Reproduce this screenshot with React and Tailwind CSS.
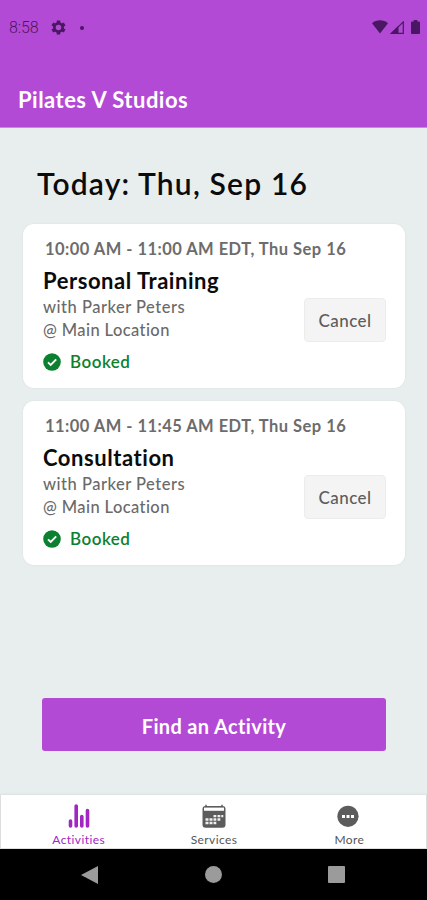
import React from 'react';

const bookings = [
  { id: 1, time: '10:00 AM - 11:00 AM EDT, Thu Sep 16', title: 'Personal Training', staff: 'Parker Peters', place: 'Main Location' },
  { id: 2, time: '11:00 AM - 11:45 AM EDT, Thu Sep 16', title: 'Consultation', staff: 'Parker Peters', place: 'Main Location' },
];

const StatusBar = () => (
  <div className="flex h-[56px] items-center pl-[9px] pr-[7px] text-[#4a1762]">
    <span className="w-[41px] whitespace-nowrap font-['Roboto'] text-[16px] font-light leading-none tracking-[-0.1px]">8:58</span>
    <svg className="-mt-px h-[17px] w-[17px]" viewBox="0 0 24 24" fill="none" stroke="currentColor">
      <circle cx="12" cy="12" r="5.8" strokeWidth="3.8" />
      <path d="M12 2v4M12 18v4M3.3 7l3.5 2M17.2 15l3.5 2M3.3 17l3.5-2M17.2 9l3.5-2" strokeWidth="5" />
    </svg>
    <span className="ml-[13px] h-[4px] w-[4px] rounded-full bg-current" />
    <div className="ml-auto mt-[-2px] flex items-center">
      <svg className="h-[14px] w-[16px]" viewBox="0 0 16 14" fill="currentColor">
        <path d="M0 3.2C4.5-.6 11.5-.6 16 3.2L8 13.5z" />
      </svg>
      <svg className="ml-[2px] h-[13px] w-[14px]" viewBox="0 0 14 13">
        <path d="M0 13 8.5 4.7V13z" fill="currentColor" />
        <path d="M1.5 12.4 13.3.9v11.5z" fill="none" stroke="currentColor" strokeWidth="1.2" />
      </svg>
      <svg className="ml-[7px] h-[14px] w-[9px]" viewBox="0 0 9 14" fill="currentColor">
        <path d="M2.7 0h3.6v1.5H8q1 0 1 1V13q0 1-1 1H1q-1 0-1-1V2.5q0-1 1-1h1.7z" />
      </svg>
    </div>
  </div>
);

const BookingCard = ({ booking }) => (
  <div className="h-[164px] rounded-[11px] bg-white pl-[20px] pr-[19px] pt-[14px] shadow-[0_0_2px_rgba(0,0,0,0.08)]">
    <p className="ml-[2px] whitespace-nowrap text-[16.5px] font-bold leading-[22px] tracking-[0.47px] text-[#6c6c6c]">{booking.time}</p>
    <div className="flex justify-between">
      <div className="whitespace-nowrap">
        <h2 className="mt-[8px] text-[22px] font-bold leading-[26px] tracking-[0.55px] text-[#0b0b0b]">{booking.title}</h2>
        <p className="mt-[2px] text-[16.5px] font-medium leading-[23px] tracking-[0.5px] text-[#6a6a6a]">with {booking.staff}</p>
        <p className="text-[16.5px] font-medium leading-[23px] tracking-[0.4px] text-[#6a6a6a]">@ {booking.place}</p>
      </div>
      <button className="mt-[38px] h-[44px] w-[82px] rounded-[4px] border border-[#ececec] bg-[#f4f4f4] pt-px text-[17px] font-medium tracking-[0.4px] text-[#5d5d5d]">
        Cancel
      </button>
    </div>
    <div className="mt-[9px] flex items-center text-[#0b8130]">
      <svg className="h-[18px] w-[18px]" viewBox="0 0 18 18">
        <circle cx="9" cy="9" r="8.8" fill="currentColor" />
        <path d="m5 9.3 2.7 2.7 5.5-5.7" fill="none" stroke="#fff" strokeWidth="1.9" />
      </svg>
      <span className="ml-[9px] text-[17px] font-semibold leading-[22px] tracking-[0.5px]">Booked</span>
    </div>
  </div>
);

const ActivityIcon = () => (
  <svg className="h-[26px] w-[24px]" viewBox="0 0 24 26" fill="none" stroke="#a126c4" strokeWidth="3.6" strokeLinecap="round">
    <path d="M3.5 18v5M9.2 3v20M14.8 13.5v9.5M20.5 7.5v15.5" />
  </svg>
);

const CalendarIcon = () => (
  <svg className="h-[26px] w-[24px]" viewBox="0 0 24 26">
    <rect x=".5" y="3" width="23" height="21.8" rx="3" fill="#5c5c5c" />
    <path d="M4 1.8v2M20 1.8v2" stroke="#5c5c5c" strokeWidth="1.5" />
    <path d="M2 4.6h20v3.2h-20z" fill="#fff" />
    <path
      d="M11.5 12h2.8v2.3h-2.8zM15.5 12h2.8v2.3h-2.8zM19.3 12h2v2.3h-2zM3.5 15.3h3v2.4h-3zM7.5 15.3h3v2.4h-3zM11.5 15.3h2.8v2.4h-2.8zM15.5 15.3h2.8v2.4h-2.8zM3.5 18.8h3v2.4h-3zM7.5 18.8h3v2.4h-3zM11.5 18.8h2.8v2.4h-2.8z"
      fill="#f0f0f0"
    />
  </svg>
);

const MoreIcon = () => (
  <svg className="h-[26px] w-[24px]" viewBox="0 0 24 26">
    <circle cx="11" cy="13.3" r="10.6" fill="#5c5c5c" />
    <path d="M5 12h3v3H5zM9.5 12h3v3h-3zM14 12h3v3h-3z" fill="#fff" />
  </svg>
);

const tabs = [
  { label: 'Activities', Icon: ActivityIcon, color: 'text-[#a126c4]' },
  { label: 'Services', Icon: CalendarIcon, color: 'text-[#555]' },
  { label: 'More', Icon: MoreIcon, color: 'text-[#555]' },
];

const App = () => {
  return (
    <div className="flex h-[900px] w-[427px] flex-col overflow-hidden bg-[#e8eeee] font-['Lato',sans-serif]">
      <header className="h-[128px] shrink-0 border-b border-[#c48fd6] bg-[#b34ad5]">
        <StatusBar />
        <h1 className="ml-[18px] mt-[30px] text-[22px] font-bold leading-[28px] tracking-[0.48px] text-white">Pilates V Studios</h1>
      </header>

      <main className="flex flex-1 flex-col">
        <h2 className="ml-[37px] mt-[35px] whitespace-nowrap text-[30px] font-semibold leading-[40px] tracking-[1.18px] text-[#0b0b0b]">Today: Thu, Sep 16</h2>
        <div className="ml-[23px] mr-[22px] mt-[21px] flex flex-col gap-[13px]">
          {bookings.map((booking) => (
            <BookingCard key={booking.id} booking={booking} />
          ))}
        </div>
        <button className="mb-[44px] ml-[42px] mr-[41px] mt-auto h-[53px] rounded-[3px] bg-[#b34ad5] pt-[2px] text-[20px] font-bold tracking-[0.35px] text-white">
          Find an Activity
        </button>
      </main>

      <nav className="flex h-[54px] shrink-0 border-x border-b border-[#dedede] bg-white pl-[10px] pr-[9px] shadow-[0_-1px_2px_rgba(0,0,0,0.06)]">
        {tabs.map(({ label, Icon, color }) => (
          <div key={label} className={`flex flex-1 flex-col items-center pt-[8px] ${color}`}>
            <Icon />
            <span className="mt-[4px] text-[12px] leading-[14px] tracking-[0.4px]">{label}</span>
          </div>
        ))}
      </nav>

      {/* Android navigation buttons */}
      <div className="flex h-[51px] shrink-0 items-center bg-black pl-[81px] pr-[82px]">
        <svg className="h-[18px] w-[17px]" viewBox="0 0 17 18" fill="#9b9b9b">
          <path d="M0 9 17 0v18z" />
        </svg>
        <span className="ml-[107px] h-[17px] w-[17px] rounded-full bg-[#9b9b9b]" />
        <span className="ml-auto h-[17px] w-[17px] rounded-[1px] bg-[#9b9b9b]" />
      </div>
    </div>
  );
};

export default App;
